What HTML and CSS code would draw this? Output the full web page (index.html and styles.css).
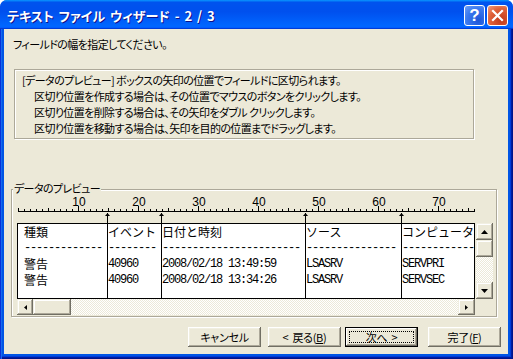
FILE: index.html
```html
<!DOCTYPE html>
<html lang="ja">
<head>
<meta charset="utf-8">
<title>テキスト ファイル ウィザード</title>
<link rel="stylesheet" href="styles.css">
</head>
<body>
<div class="window">
  <div class="titlebar">
    <span class="title">テキスト ファイル ウィザード - 2 / 3</span>
    <div class="tb-buttons">
      <div class="tb-btn help"><span class="q">?</span></div>
      <div class="tb-btn close">
        <svg width="13" height="13" viewBox="0 0 13 13"><path d="M2 2 L11 11 M11 2 L2 11" stroke="#fff" stroke-width="2.2" stroke-linecap="square"/></svg>
      </div>
    </div>
  </div>
  <div class="frame">
    <div class="body">
      <p class="prompt">フィールドの幅を指定してください。</p>
      <div class="etched">
        <p>[データのプレビュー] ボックスの矢印の位置でフィールドに区切られます。</p>
        <p class="ind">区切り位置を作成する場合は、その位置でマウスのボタンをクリックします。</p>
        <p class="ind">区切り位置を削除する場合は、その矢印をダブル クリックします。</p>
        <p class="ind">区切り位置を移動する場合は、矢印を目的の位置までドラッグします。</p>
      </div>
      <div class="group">
        <span class="group-label">データのプレビュー</span>
        <div class="preview">
          <svg class="ruler" width="458" height="29" viewBox="0 0 458 29">
            <defs>
              <pattern id="tick" x="1" y="0" width="6" height="29" patternUnits="userSpaceOnUse">
                <rect x="0" y="15" width="1" height="2" fill="#000"/>
              </pattern>
            </defs>
            <rect x="1" y="0" width="457" height="29" fill="url(#tick)"/>
            <rect x="1" y="17" width="457" height="1" fill="#000"/>
            <g fill="#000">
              <rect x="1" y="14" width="1" height="3"/>
              <rect x="31" y="14" width="1" height="3"/>
              <rect x="91" y="14" width="1" height="3"/>
              <rect x="151" y="14" width="1" height="3"/>
              <rect x="211" y="14" width="1" height="3"/>
              <rect x="271" y="14" width="1" height="3"/>
              <rect x="331" y="14" width="1" height="3"/>
              <rect x="391" y="14" width="1" height="3"/>
              <rect x="451" y="14" width="1" height="3"/>
              <rect x="61" y="12" width="1" height="5"/>
              <rect x="121" y="12" width="1" height="5"/>
              <rect x="181" y="12" width="1" height="5"/>
              <rect x="241" y="12" width="1" height="5"/>
              <rect x="301" y="12" width="1" height="5"/>
              <rect x="361" y="12" width="1" height="5"/>
              <rect x="421" y="12" width="1" height="5"/>
            </g>
            <g class="nums" text-anchor="middle">
              <text x="62" y="12">10</text>
              <text x="122" y="12">20</text>
              <text x="182" y="12">30</text>
              <text x="242" y="12">40</text>
              <text x="302" y="12">50</text>
              <text x="362" y="12">60</text>
              <text x="422" y="12">70</text>
            </g>
          </svg>
          <div class="scrollgrid">
            <div class="data">
              <div class="c1 cjk">種類</div><div class="cjk">イベント</div><div class="cjk">日付と時刻</div><div class="cjk">ソース</div><div class="cjk">コンピュータ</div>
              <div class="c1 mono">-------------</div><div class="mono">--------</div><div class="mono">-----------------------</div><div class="mono">---------------</div><div class="mono">------------</div>
              <div class="c1 cjk">警告</div><div class="mono">40960</div><div class="mono">2008/02/18 13:49:59</div><div class="mono">LSASRV</div><div class="mono">SERVPRI</div>
              <div class="c1 cjk">警告</div><div class="mono">40960</div><div class="mono">2008/02/18 13:34:26</div><div class="mono">LSASRV</div><div class="mono">SERVSEC</div>
            </div>
            <div class="vscroll">
              <div class="sbtn v"><svg width="7" height="4" viewBox="0 0 7 4"><path d="M3.5 0 L7 4 L0 4Z" fill="#000"/></svg></div>
              <div class="sbtn v"></div>
              <div class="track"></div>
              <div class="sbtn v"><svg width="7" height="4" viewBox="0 0 7 4"><path d="M0 0 L7 0 L3.5 4Z" fill="#000"/></svg></div>
            </div>
            <div class="hscroll">
              <div class="sbtn h"><svg width="3" height="5" viewBox="0 0 3 5"><path d="M3 0 L3 5 L0 2.5Z" fill="#000"/></svg></div>
              <div class="sbtn h thumb"></div>
              <div class="track"></div>
              <div class="sbtn h"><svg width="3" height="5" viewBox="0 0 3 5"><path d="M0 0 L3 2.5 L0 5Z" fill="#000"/></svg></div>
            </div>
            <div class="corner"></div>
          </div>
          <svg class="breaks" width="476" height="105" viewBox="0 0 476 105">
            <g fill="#000">
              <path d="M88 22 L90.5 19 L93 22Z"/><rect x="90" y="19" width="1" height="85"/>
              <path d="M142 22 L144.5 19 L147 22Z"/><rect x="144" y="19" width="1" height="85"/>
              <path d="M286 22 L288.5 19 L291 22Z"/><rect x="288" y="19" width="1" height="85"/>
              <path d="M382 22 L384.5 19 L387 22Z"/><rect x="384" y="19" width="1" height="85"/>
            </g>
          </svg>
        </div>
      </div>
      <div class="buttons">
        <div class="btn">キャンセル</div>
        <div class="btn back"><span class="gap-r">&lt;</span>戻る(<u>B</u>)</div>
        <div class="btn default">次へ<span class="gap-l">&gt;</span></div>
        <div class="btn finish">完了(<u>F</u>)</div>
      </div>
    </div>
  </div>
</div>
</body>
</html>
```
FILE: styles.css
```css
* { box-sizing: border-box; margin: 0; padding: 0; }
html, body { width: 513px; height: 359px; overflow: hidden; background: #fff; }
body {
  font-family: "Noto Sans CJK JP", "Noto Sans", sans-serif;
  font-size: 11px;
  letter-spacing: -0.6px;
  font-feature-settings: "palt";
  color: #000;
}
.window {
  width: 513px; height: 359px;
  display: flex; flex-direction: column;
  border-radius: 7px 7px 0 0;
  overflow: hidden;
  background: #0055e5;
}
.titlebar {
  height: 29px; flex: none;
  display: flex; align-items: center; justify-content: space-between;
  padding: 0 5px 0 7px;
  background: linear-gradient(180deg, #0997ff, #0053ee 8%, #0050ee 40%, #06f 88%, #06f 93%, #005bff 95%, #003dd7 96%, #003dd7);
}
.title {
  color: #fff; font-weight: bold; font-size: 13px; letter-spacing: 0;
  word-spacing: 2px;
  text-shadow: 1px 1px #0f1089;
  margin-top: 1px;
}
.tb-buttons { display: flex; gap: 2px; margin-top: 1px; }
.tb-btn {
  width: 21px; height: 21px;
  border: 1px solid #fff; border-radius: 3px;
  display: flex; align-items: center; justify-content: center;
}
.help { background: radial-gradient(circle at 70% 75%, #1c55d8, #3b7af0 60%, #6fa0f6); }
.help .q { color: #fff; font-family: "Liberation Sans", sans-serif; font-weight: bold; font-size: 17px; line-height: 1; letter-spacing: 0; }
.close { background: radial-gradient(circle at 70% 75%, #c0391b, #e0623a 60%, #f0a080); }
.frame {
  flex: 1; display: flex;
  padding: 0 5px 5px 4px;
  background: #0055e5;
  box-shadow: inset 1px 0 #0831d9, inset 2px 0 #166aee, inset -1px -1px #00138c, inset -2px -2px #001ea0, inset -3px -3px #003bda;
}
.body {
  flex: 1; background: #ece9d8;
  display: flex; flex-direction: column;
}
.prompt { margin: 7px 0 0 9px; line-height: 16px; }
.etched {
  margin: 17px 0 0 10px;
  width: 460px; height: 70px;
  border: 1px solid #aca899;
  box-shadow: inset 1px 1px #fff, 1px 1px #fff;
  padding: 2px 0 0 7px;
}
.etched p { line-height: 16px; white-space: nowrap; }
.etched .ind { padding-left: 12px; }
.group {
  position: relative;
  margin: 50px 0 0 7px;
  width: 486px; height: 128px;
  border: 1px solid #aca899;
  box-shadow: inset 1px 1px #fff, 1px 1px #fff;
  padding: 4px 0 0 5px;
}
.group-label {
  position: absolute; left: 1px; top: -8px;
  background: #ece9d8; line-height: 13px; padding: 0 1px;
}
.preview { position: relative; width: 476px; }
.ruler { display: block; }
.nums { font-family: "Liberation Sans", sans-serif; font-size: 12px; letter-spacing: 0; }
.scrollgrid {
  display: grid;
  grid-template-columns: 458px 17px;
  grid-template-rows: 76px 16px;
  column-gap: 1px;
}
.data {
  border: 1px solid #000; background: #fff;
  overflow: hidden;
  display: grid;
  grid-template-columns: 90px 54px 144px 96px 72px;
  grid-auto-rows: 16px;
}
.data > div { white-space: pre; overflow: hidden; line-height: 16px; }
.data .c1 { padding-left: 6px; }
.cjk { font-family: "Noto Sans CJK JP", sans-serif; font-size: 12px; letter-spacing: 0; font-feature-settings: normal; }
.mono { font-family: "Liberation Mono", monospace; font-size: 12px; letter-spacing: -1.2px; }
.vscroll { display: flex; flex-direction: column; }
.hscroll { display: flex; }
.sbtn {
  flex: none; background: #ece9d8;
  display: flex; align-items: center; justify-content: center;
  box-shadow: inset -1px -1px #716f64, inset 1px 1px #f1efe2, inset -2px -2px #aca899, inset 2px 2px #fff;
}
.sbtn.v { height: 17px; }
.sbtn.h { width: 17px; }
.hscroll .sbtn.h:first-child { width: 16px; }
.sbtn.thumb { width: 38px; }
.track { flex: 1; background: repeating-conic-gradient(#fff 0 25%, #ece9d8 0 50%) 0 0 / 2px 2px; }
.corner { background: #ece9d8; }
.breaks { position: absolute; left: 0; top: 0; pointer-events: none; }
.buttons {
  display: flex; justify-content: flex-end;
  margin-top: 10px; padding-right: 7px;
}
.btn {
  position: relative;
  width: 73px; height: 20px;
  background: #ece9d8;
  display: flex; align-items: center; justify-content: center;
  line-height: 16px; white-space: nowrap; letter-spacing: -0.3px;
  box-shadow: inset -1px -1px #716f64, inset 1px 1px #fff, inset -2px -2px #aca899, inset 2px 2px #f1efe2;
}
.gap-r { margin-right: 4px; }
.gap-l { margin-left: 4px; }
.btn.back { margin-left: 7px; }
.btn.default {
  margin-left: 4px;
  box-shadow: inset 0 0 0 1px #000, inset -2px -2px #716f64, inset 2px 2px #fff, inset -3px -3px #aca899;
}
.btn.default::after {
  content: ""; position: absolute; inset: 4px;
  border: 1px dotted #000;
}
.btn.finish { margin-left: 10px; }
u { text-decoration: underline; }
```
